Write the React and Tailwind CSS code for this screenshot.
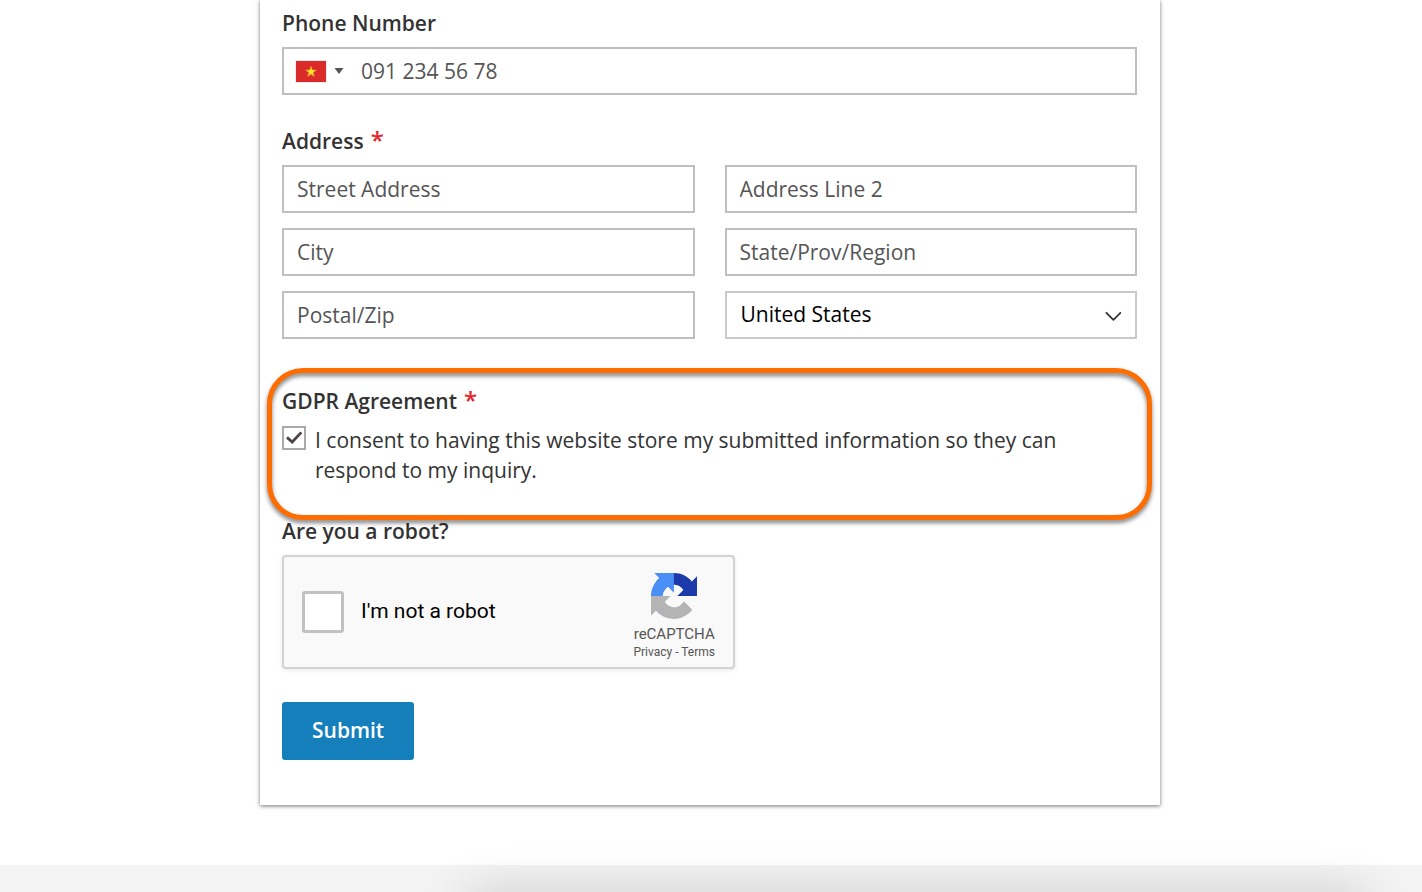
import { useState } from "react";

const fieldClass =
  "w-full h-12 px-[13px] border-2 border-[#bfbfbf] bg-white text-[21px] text-[#333] placeholder:text-[#555] placeholder:opacity-100 outline-none";

const labelClass = "block mb-[9px] text-[21px] leading-[30px] font-semibold text-[#333]";

const addressFields = [
  { id: "street", placeholder: "Street Address" },
  { id: "line2", placeholder: "Address Line 2" },
  { id: "city", placeholder: "City" },
  { id: "state", placeholder: "State/Prov/Region" },
  { id: "zip", placeholder: "Postal/Zip" },
];

function Required() {
  return <span className="ml-[7px] text-2xl leading-none text-[#e8252b]">*</span>;
}

function VietnamFlag() {
  return (
    <svg viewBox="0 0 30 21" className="w-[30px] h-[21px] shadow-[0_0_1px_#888]" aria-hidden="true">
      <rect width="30" height="21" fill="#da2a29" />
      <path
        d="M15 5.2l1.4 3.7 3.9.2-3 2.5 1 3.9-3.3-2.2-3.3 2.2 1-3.9-3-2.5 3.9-.2z"
        fill="#f9e42c"
        stroke="#e9842a"
        strokeWidth="0.7"
      />
    </svg>
  );
}

function RecaptchaLogo() {
  return (
    <svg viewBox="0 0 64 64" className="w-[46px] h-[46px]" aria-hidden="true">
      <path
        fill="#1c3aa9"
        d="M64 31.955l-.033-1.37V4.687l-7.16 7.16C50.948 4.674 42.033.093 32.05.093c-10.4 0-19.622 4.96-25.458 12.64l11.736 11.86a15.55 15.55 0 0 1 4.754-5.334c2.05-1.6 4.952-2.906 8.968-2.906.485 0 .86.057 1.135.163 4.976.393 9.288 3.14 11.828 7.124l-8.307 8.307L64 31.953"
      />
      <path
        fill="#4a8ff6"
        d="M31.862.094l-1.37.033H4.594l7.16 7.16C4.58 13.147 0 22.06 0 32.046c0 10.4 4.96 19.622 12.64 25.458L24.5 45.768a15.55 15.55 0 0 1-5.334-4.754c-1.6-2.05-2.906-4.952-2.906-8.968 0-.485.057-.86.163-1.135.393-4.976 3.14-9.288 7.124-11.828l8.307 8.307L31.86.095"
      />
      <path
        fill="#b4b4b4"
        d="M.001 32.045l.033 1.37v25.898l7.16-7.16c5.86 7.173 14.774 11.754 24.76 11.754 10.4 0 19.622-4.96 25.458-12.64l-11.736-11.86a15.55 15.55 0 0 1-4.754 5.334c-2.05 1.6-4.952 2.906-8.968 2.906-.485 0-.86-.057-1.135-.163-4.976-.393-9.288-3.14-11.828-7.124l8.307-8.307c-10.522.04-22.4.066-27.295-.005"
      />
    </svg>
  );
}

function Recaptcha() {
  const [checked, setChecked] = useState(false);

  return (
    <div className="flex items-center w-full max-w-[453px] h-[114px] px-[18px] border-2 border-[#d3d3d3] rounded bg-[#f9f9f9] shadow-[0_1px_4px_rgba(0,0,0,0.1)] font-['Roboto',sans-serif]">
      <input
        id="robot"
        type="checkbox"
        checked={checked}
        onChange={(e) => setChecked(e.target.checked)}
        className="appearance-none shrink-0 w-[42px] h-[42px] border-3 border-[#c1c1c1] rounded-[3px] bg-white checked:bg-[#4a8ff6]"
      />
      <label htmlFor="robot" className="ml-[17px] text-[21px] text-black">
        I'm not a robot
      </label>
      <div className="ml-auto pt-2 flex flex-col items-center text-[#555]">
        <RecaptchaLogo />
        <span className="mt-1 text-[15px] leading-[22px]">reCAPTCHA</span>
        <span className="text-xs leading-[14px]">
          <a href="#privacy">Privacy</a> - <a href="#terms">Terms</a>
        </span>
      </div>
    </div>
  );
}

export default function App() {
  const [consent, setConsent] = useState(true);

  return (
    <div className="relative min-h-screen flex flex-col overflow-hidden bg-white font-['Open_Sans',sans-serif]">
      <main className="flex-1 pr-0.5 pb-[60px]">
        <form
          onSubmit={(e) => e.preventDefault()}
          className="max-w-[900px] mx-auto pt-2 pl-[22px] pr-[23px] pb-[45px] bg-white shadow-[0_1px_4px_rgba(0,0,0,0.55)]"
        >
          <div>
            <label htmlFor="phone" className={labelClass}>
              Phone Number
            </label>
            <div className="flex h-12 pl-3 border-2 border-[#bfbfbf]">
              <button type="button" aria-label="Country code" className="flex items-center gap-2">
                <VietnamFlag />
                <svg viewBox="0 0 10 6" className="w-[10px] h-[6px]" aria-hidden="true">
                  <path d="M0.5 0h9L5 6z" fill="#555" />
                </svg>
              </button>
              <input
                id="phone"
                type="tel"
                placeholder="091 234 56 78"
                className="flex-1 min-w-0 ml-[17px] pt-px text-[21px] text-[#333] placeholder:text-[#555] placeholder:opacity-100 outline-none"
              />
            </div>
          </div>

          <fieldset className="mt-[31px]">
            <legend className={labelClass}>
              Address
              <Required />
            </legend>
            <div className="grid grid-cols-1 sm:grid-cols-2 gap-x-[30px] gap-y-[15px]">
              {addressFields.map((field) => (
                <input
                  key={field.id}
                  id={field.id}
                  type="text"
                  aria-label={field.placeholder}
                  placeholder={field.placeholder}
                  className={fieldClass}
                />
              ))}
              <div className="relative">
                <select
                  aria-label="Country"
                  defaultValue="us"
                  className="appearance-none w-full h-12 px-[14px] border-2 border-[#c9c9c9] bg-white text-[21px] text-black outline-none"
                >
                  <option value="us">United States</option>
                  <option value="ca">Canada</option>
                  <option value="vn">Vietnam</option>
                </select>
                <svg
                  viewBox="0 0 16 10"
                  className="absolute right-4 top-5 w-4 h-[10px] pointer-events-none"
                  aria-hidden="true"
                >
                  <path
                    d="M1.4 1.8l7 7 7-7"
                    fill="none"
                    stroke="#333"
                    strokeWidth="1.8"
                    strokeLinecap="round"
                    strokeLinejoin="round"
                  />
                </svg>
              </div>
            </div>
          </fieldset>

          <div className="relative mt-[47px]">
            <fieldset>
              <legend className={labelClass}>
                GDPR Agreement
                <Required />
              </legend>
              <div className="flex items-start gap-[9px]">
                <span className="relative shrink-0 mt-px w-6 h-6">
                  <input
                    id="consent"
                    type="checkbox"
                    checked={consent}
                    onChange={(e) => setConsent(e.target.checked)}
                    className="block appearance-none w-6 h-6 border-2 border-[#aaa] bg-white"
                  />
                  {consent && (
                    <svg
                      viewBox="0 0 24 24"
                      className="absolute inset-0 w-6 h-6 pointer-events-none"
                      aria-hidden="true"
                    >
                      <path d="M5 11.4l5.2 4.6L19.3 6.4" fill="none" stroke="#4a4542" strokeWidth="2.8" />
                    </svg>
                  )}
                </span>
                <label htmlFor="consent" className="max-w-[770px] text-[21px] leading-[30px] text-[#333]">
                  I consent to having this website store my submitted information so they can respond to
                  my inquiry.
                </label>
              </div>
            </fieldset>
            <div className="absolute -inset-x-[15px] -top-[18px] -bottom-[35px] border-5 border-[#ff6d00] rounded-[36px] drop-shadow-[0_3px_2px_rgba(0,0,0,0.5)] pointer-events-none" />
          </div>

          <div className="mt-[31px]">
            <h2 className={labelClass}>Are you a robot?</h2>
            <Recaptcha />
          </div>

          <button
            type="submit"
            className="mt-[33px] h-[58px] px-[30px] rounded-[3px] bg-[#157fbc] text-[21px] font-semibold text-white"
          >
            Submit
          </button>
        </form>
      </main>

      <footer className="h-[27px] bg-[#f3f3f3]" />
      <div className="absolute top-full left-[33%] right-[4%] h-10 shadow-[0_0_48px_rgba(0,0,0,0.16)] pointer-events-none" />
    </div>
  );
}
